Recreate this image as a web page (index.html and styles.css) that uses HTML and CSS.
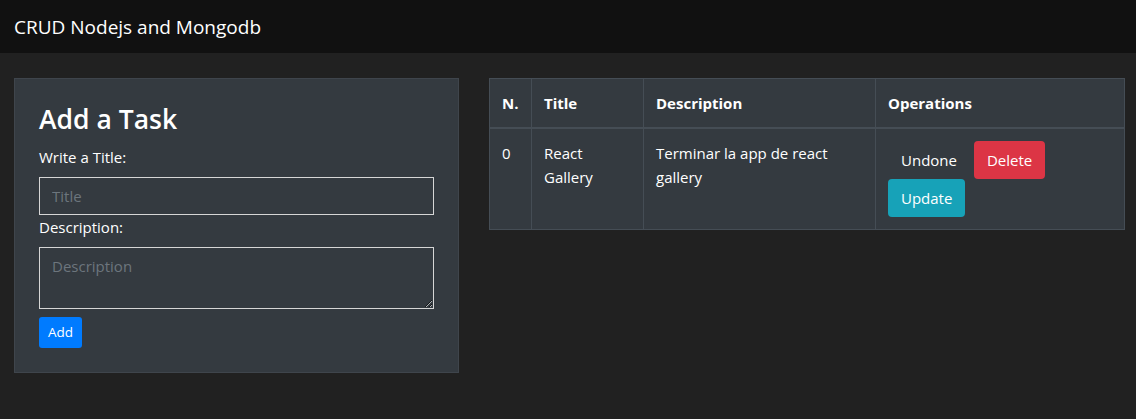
FILE: index.html
```html
<!DOCTYPE html>
<html lang="en">
<head>
<meta charset="utf-8">
<title>CRUD Nodejs and Mongodb</title>
<link rel="stylesheet" href="styles.css">
</head>
<body>
<nav class="navbar">
  <span class="brand">CRUD Nodejs and Mongodb</span>
</nav>
<main class="main">
  <section class="card">
    <h3 class="card-title">Add a Task</h3>
    <form class="form">
      <label class="label">Write a Title:</label>
      <input class="field" type="text" placeholder="Title">
      <label class="label">Description:</label>
      <textarea class="field area" placeholder="Description"></textarea>
      <button type="button" class="btn btn-sm btn-primary">Add</button>
    </form>
  </section>
  <section class="table-wrap">
    <table class="table">
      <colgroup>
        <col class="c1"><col class="c2"><col class="c3"><col class="c4">
      </colgroup>
      <thead>
        <tr><th>N.</th><th>Title</th><th>Description</th><th>Operations</th></tr>
      </thead>
      <tbody>
        <tr>
          <td>0</td>
          <td>React Gallery</td>
          <td>Terminar la app de react gallery</td>
          <td><button class="btn btn-plain">Undone</button> <button class="btn btn-danger">Delete</button> <button class="btn btn-info">Update</button></td>
        </tr>
      </tbody>
    </table>
  </section>
</main>
</body>
</html>
```

FILE: styles.css
```css
* { box-sizing: border-box; }
html, body { margin: 0; padding: 0; }
body {
  background: #212121;
  color: #fff;
  font-family: "Open Sans", "Noto Sans", sans-serif;
  font-size: 15px;
  line-height: 24px;
}
.navbar {
  background: #111111;
  height: 53px;
  display: flex;
  align-items: center;
  padding: 0 14px;
}
.brand { font-size: 19px; color: #fff; }
.main {
  display: flex;
  align-items: flex-start;
  padding: 25px 12px 0 14px;
  gap: 30px;
}
.card {
  flex: none;
  width: 445px;
  background: #343a40;
  border: 1px solid #3f454c;
  padding: 24px;
}
.card-title {
  margin: 0 0 8px;
  font-size: 26.5px;
  font-weight: 600;
  line-height: 33.6px;
}
.form { display: flex; flex-direction: column; align-items: flex-start; }
.label { display: block; margin-bottom: 8px; }
.field {
  width: 100%;
  height: 38px;
  background: #343a40;
  border: 1px solid #d6d6d6;
  color: #fff;
  font: inherit;
  padding: 6px 12px;
  outline: none;
}
.field::placeholder { color: #6c757d; }
.area { height: 62px; resize: vertical; margin-bottom: 8px; display: block; }
.btn {
  display: inline-block;
  border: 1px solid transparent;
  border-radius: 4px;
  font: inherit;
  font-size: 15px;
  line-height: 24px;
  padding: 6px 12px;
  color: #fff;
  background: transparent;
  cursor: pointer;
  vertical-align: middle;
}
.btn-sm { font-size: 13.5px; line-height: 21px; padding: 4px 8px; border-radius: 3px; }
.btn-primary { background: #007bff; }
.btn-danger { background: #dc3545; }
.btn-info { background: #17a2b8; }
.table-wrap { flex: none; }
.table {
  width: 635px;
  border-collapse: collapse;
  background: #343a40;
  table-layout: fixed;
}
.c1 { width: 42px; } .c2 { width: 112px; } .c3 { width: 232px; } .c4 { width: 249px; }
.table th, .table td {
  border: 1px solid #454d55;
  padding: 12px;
  text-align: left;
  vertical-align: top;
}
.table th { font-weight: 700; }
.table thead th { border-bottom: 2px solid #454d55; }
```
